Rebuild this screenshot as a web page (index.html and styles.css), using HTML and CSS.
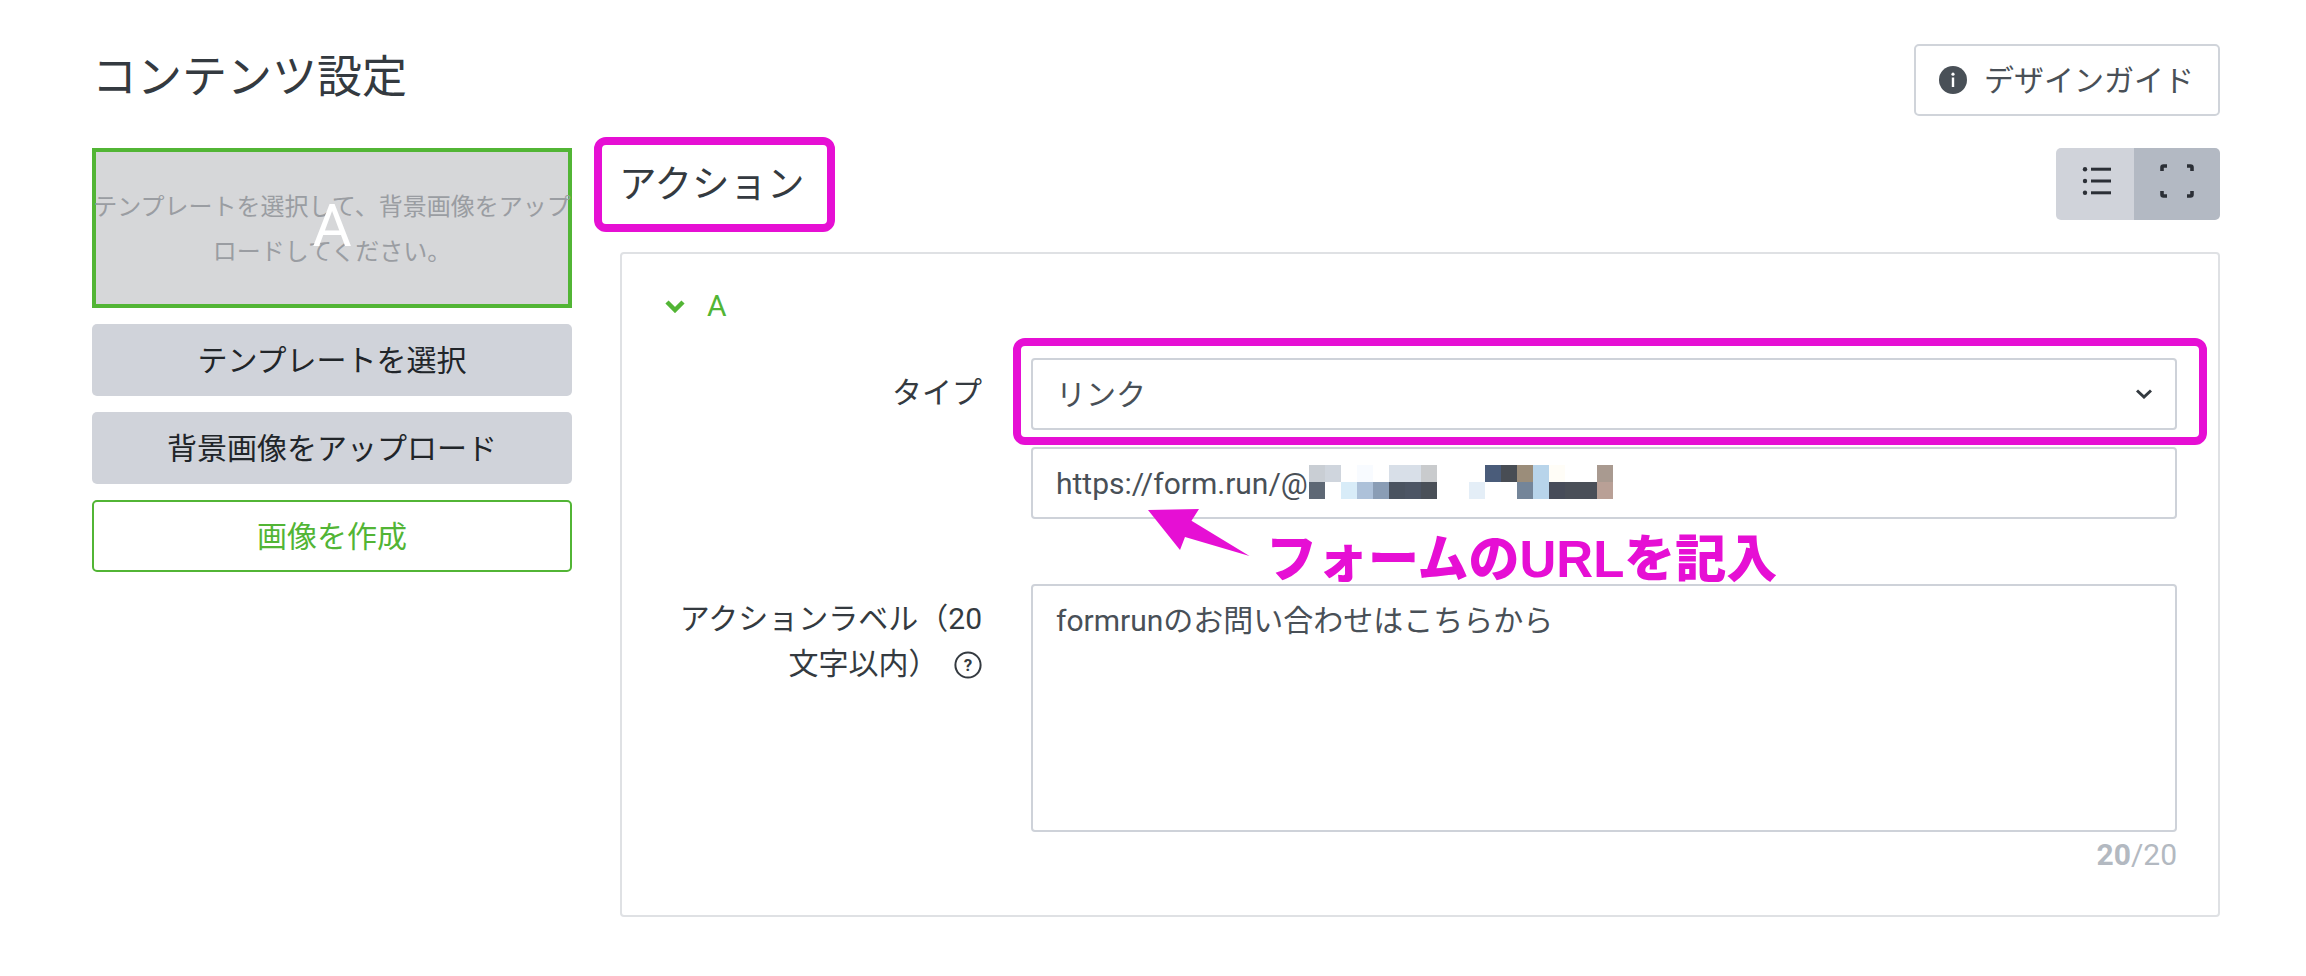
FILE: index.html
```html
<!DOCTYPE html>
<html lang="ja">
<head>
  <meta charset="UTF-8" />
  <title>コンテンツ設定</title>
  <link rel="stylesheet" href="styles.css">
</head>
<body>
<div class="page">
  <div class="page-header">
    <h1 class="page-title">コンテンツ設定</h1>
    <a class="guide-btn">
      <svg class="guide-icon" viewBox="0 0 28 28"><circle cx="14" cy="14" r="14" fill="#495057"/><circle cx="14" cy="8.2" r="1.6" fill="#fff"/><rect x="12.8" y="11.5" width="2.4" height="9.5" fill="#fff"/></svg>
      デザインガイド
    </a>
  </div>

  <div class="content">
    <div class="side">
      <div class="preview">
        <p class="preview-text">テンプレートを選択して、背景画像をアップロードしてください。</p>
        <span class="preview-letter">A</span>
      </div>
      <button class="btn">テンプレートを選択</button>
      <button class="btn">背景画像をアップロード</button>
      <button class="btn btn-outline">画像を作成</button>
    </div>

    <div class="main">
      <div class="main-header">
        <h2 class="section-title">アクション</h2>
        <div class="view-toggle">
          <span class="toggle-item">
            <svg width="30" height="28" viewBox="0 0 30 28" fill="#2b2f36"><circle cx="3" cy="2.200" r="2.200"/><circle cx="3" cy="14" r="2.200"/><circle cx="3" cy="25.800" r="2.200"/><rect x="9" y="0.700" width="20" height="3"/><rect x="9" y="12.500" width="20" height="3"/><rect x="9" y="24.300" width="20" height="3"/></svg>
          </span>
          <span class="toggle-item toggle-active">
            <svg width="34" height="34" viewBox="0 0 34 34" fill="none" stroke="#2b2f36" stroke-width="3.600" stroke-linecap="butt" stroke-linejoin="round"><path d="M2 7V3.500Q2 2 3.500 2H7"/><path d="M27 2h3.500Q32 2 32 3.500V7"/><path d="M2 27v3.500Q2 32 3.500 32H7"/><path d="M27 32h3.500Q32 32 32 30.500V27"/></svg>
          </span>
        </div>
      </div>

      <div class="panel">
        <div class="panel-head">
          <svg width="20" height="14" viewBox="0 0 20 14" fill="none" stroke="#52b535" stroke-width="4.500"><path d="M2 3l8 8 8-8"/></svg>
          <span>A</span>
        </div>

        <div class="field field-type">
          <label class="field-label">タイプ</label>
          <div class="field-body">
            <div class="control select">
              リンク
              <svg width="16" height="10" viewBox="0 0 16 10" fill="none" stroke="#343a40" stroke-width="3"><path d="M1 1.500l7 6.500 7-6.500"/></svg>
            </div>
            <div class="control url">
              https://form.run/@
              <svg class="mosaic" width="304" height="34" viewBox="0 0 19 2" preserveAspectRatio="none" shape-rendering="crispEdges">
                <rect x="0" y="0" width="1" height="1" fill="#c9ced4"/><rect x="1" y="0" width="1" height="1" fill="#cfd5dd"/><rect x="3" y="0" width="1" height="1" fill="#f8fbff"/><rect x="5" y="0" width="2" height="1" fill="#d8dfe8"/><rect x="7" y="0" width="1" height="1" fill="#c9cbcd"/><rect x="11" y="0" width="1" height="1" fill="#4a5c7a"/><rect x="12" y="0" width="1" height="1" fill="#484d54"/><rect x="13" y="0" width="1" height="1" fill="#9b8d7a"/><rect x="14" y="0" width="1" height="1" fill="#b8d4ea"/><rect x="15" y="0" width="1" height="1" fill="#fffdf7"/><rect x="18" y="0" width="1" height="1" fill="#a99a90"/>
                <rect x="0" y="1" width="1" height="1" fill="#5e6875"/><rect x="2" y="1" width="1" height="1" fill="#d8ecf8"/><rect x="3" y="1" width="1" height="1" fill="#adc1d9"/><rect x="4" y="1" width="1" height="1" fill="#8a9db5"/><rect x="5" y="1" width="1" height="1" fill="#4a5360"/><rect x="6" y="1" width="1" height="1" fill="#4c5564"/><rect x="7" y="1" width="1" height="1" fill="#4a5058"/><rect x="10" y="1" width="1" height="1" fill="#e4eef7"/><rect x="13" y="1" width="1" height="1" fill="#748599"/><rect x="14" y="1" width="1" height="1" fill="#b8d4ea"/><rect x="15" y="1" width="1" height="1" fill="#474c59"/><rect x="16" y="1" width="2" height="1" fill="#4a4f58"/><rect x="18" y="1" width="1" height="1" fill="#b9a096"/>
              </svg>
            </div>
          </div>
        </div>

        <div class="field field-label-text">
          <label class="field-label">アクションラベル（20文字以内）
            <svg class="help-icon" viewBox="0 0 28 28"><circle cx="14" cy="14" r="12.600" fill="none" stroke="#343a40" stroke-width="2"/><text x="14" y="19.500" text-anchor="middle" class="help-mark">?</text></svg>
          </label>
          <div class="field-body">
            <div class="control textarea">formrunのお問い合わせはこちらから</div>
            <div class="counter"><b>20</b>/20</div>
          </div>
        </div>
      </div>
    </div>
  </div>

  <!-- annotations drawn on top of the screenshot -->
  <div class="mark mark-title"></div>
  <div class="mark mark-type"></div>
  <svg class="mark-arrow" width="110" height="50" viewBox="0 0 110 50"><path d="M0 1L51 0L43.500 11.700L101.500 47L37 28L32 41Z" fill="#e60fd4"/></svg>
  <div class="mark-note">フォームのURLを記入</div>
</div>
</body>
</html>
```

FILE: styles.css
```css
* {
  box-sizing: border-box;
}

body {
  margin: 0;
  background: #fff;
  color: #343a40;
  font-family: Roboto, 'Noto Sans CJK JP', sans-serif;
  font-size: 30px;
  line-height: 45px;
  overflow: hidden;
}

.page {
  position: relative;
  height: 976px;
  padding: 44px 86px 0 92px;
}

.page-header {
  display: flex;
  justify-content: space-between;
  align-items: flex-start;
  height: 72px;
  margin-bottom: 32px;
}

.page-title {
  margin: 1px 0 0 0;
  font-size: 45px;
  font-weight: 400;
  line-height: 66px;
  color: #343a40;
}

.guide-btn {
  display: flex;
  align-items: center;
  gap: 17px;
  width: 306px;
  height: 72px;
  padding-left: 23px;
  border: 2px solid #d0d4da;
  border-radius: 5px;
  color: #495057;
}

.guide-icon {
  width: 28px;
  height: 28px;
}

.content {
  display: flex;
  gap: 48px;
}

.side {
  display: flex;
  flex-direction: column;
  gap: 16px;
  flex: 0 0 480px;
}

.preview {
  position: relative;
  display: flex;
  align-items: center;
  justify-content: center;
  height: 160px;
  background: #d6d7d9;
  border: 4px solid #52b535;
}

.preview-text {
  margin: 3px -5px 0;
  font-size: 24px;
  line-height: 45px;
  text-align: center;
  color: #9a9da2;
}

.preview-letter {
  position: absolute;
  top: 34px;
  left: 0;
  right: 0;
  text-align: center;
  font-size: 60px;
  line-height: 80px;
  color: #fff;
}

.btn {
  height: 72px;
  padding: 0;
  border: 0;
  border-radius: 5px;
  background: #d0d3da;
  color: #212529;
  font: inherit;
}

.btn-outline {
  background: #fff;
  border: 2px solid #52b535;
  color: #52b535;
}

.main {
  flex: 1;
}

.main-header {
  display: flex;
  justify-content: space-between;
  align-items: center;
  height: 72px;
  margin-bottom: 32px;
}

.section-title {
  margin: 0 0 0 -1px;
  font-size: 37.500px;
  font-weight: 400;
  line-height: 54px;
}

.view-toggle {
  display: flex;
  height: 72px;
  border-radius: 5px;
  overflow: hidden;
}

.toggle-item {
  display: flex;
  align-items: center;
  justify-content: center;
  width: 78px;
  padding: 0 0 6px 3px;
  background: #d0d3da;
}

.toggle-active {
  width: 86px;
  padding: 0 0 6px 0;
  background: #b3b9c3;
}

.panel {
  height: 665px;
  padding: 29px 41px 0 43px;
  border: 2px solid #dfe1e4;
  border-radius: 4px;
}

.panel-head {
  display: flex;
  align-items: center;
  gap: 22px;
  color: #52b535;
}

.field {
  display: flex;
  gap: 49px;
}

.field-type {
  margin-top: 30px;
}

.field-label-text {
  margin-top: 65px;
}

.field-label {
  flex: 0 0 317px;
  padding-top: 12px;
  text-align: right;
}

.field-body {
  flex: 1;
}

.control {
  padding: 12px 23px;
  border: 2px solid #ced2d9;
  border-radius: 4px;
  color: #495057;
}

.select {
  display: flex;
  justify-content: space-between;
  align-items: center;
  height: 72px;
}

.url {
  display: flex;
  align-items: center;
  height: 72px;
  margin-top: 17px;
}

.mosaic {
  margin: -3px 0 0 1px;
}

.textarea {
  height: 248px;
}

.counter {
  text-align: right;
  color: #b3b9c1;
}

.help-icon {
  width: 28px;
  height: 28px;
  margin-left: 8px;
  vertical-align: -5px;
}

.help-mark {
  font-size: 17px;
  font-weight: 700;
  fill: #343a40;
}

.mark {
  position: absolute;
  border: 8px solid #e60fd4;
  border-radius: 12px;
}

.mark-title {
  left: 594px;
  top: 137px;
  width: 241px;
  height: 95px;
}

.mark-type {
  left: 1013px;
  top: 338px;
  width: 1194px;
  height: 107px;
}

.mark-arrow {
  position: absolute;
  left: 1148px;
  top: 509px;
}

.mark-note {
  position: absolute;
  left: 1266px;
  top: 524px;
  font-family: 'Liberation Sans', 'Noto Sans CJK JP', sans-serif;
  font-size: 51px;
  font-weight: 900;
  line-height: 72px;
  white-space: nowrap;
  color: #e60fd4;
}
```
